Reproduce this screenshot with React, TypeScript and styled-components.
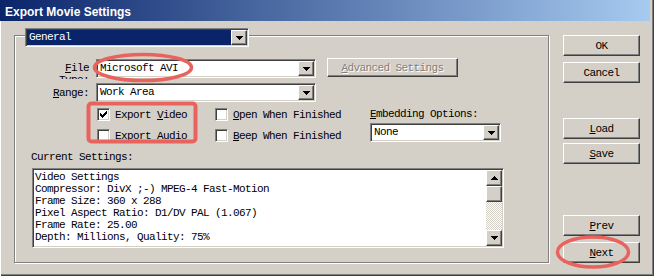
import React from 'react';
import styled, { createGlobalStyle, css } from 'styled-components';

const GlobalStyle = createGlobalStyle`
  * {
    box-sizing: border-box;
    margin: 0;
    padding: 0;
  }

  body {
    background: #d4d0c8;
    font-family: 'Liberation Mono', 'Courier New', monospace;
    font-size: 11px;
    letter-spacing: -0.6px;
    color: #000;
  }
`;

// classic 3d borders
const sunken = css`
  border: 1px solid;
  border-color: #808080 #ffffff #ffffff #808080;
  box-shadow: inset 1px 1px 0 #404040, inset -1px -1px 0 #d4d0c8;
`;

const raised = css`
  border: 1px solid;
  border-color: #ffffff #404040 #404040 #ffffff;
  box-shadow: inset -1px -1px 0 #808080;
  background: #d4d0c8;
`;

const Window = styled.div`
  position: relative;
  width: 654px;
  height: 276px;
  background: #d4d0c8;
  box-shadow: inset 1px 0 0 #ffffff, inset -1px -1px 0 #404040, inset -2px -2px 0 #808080;
  overflow: hidden;
`;

const TitleBar = styled.div`
  height: 21px;
  margin-right: 4px;
  padding: 3px 0 0 5px;
  display: flex;
  align-items: center;
  background: linear-gradient(to right, #0a246a, #a6caf0);
`;

const TitleText = styled.span`
  font-family: 'Liberation Sans', Arial, sans-serif;
  font-weight: bold;
  font-size: 12px;
  letter-spacing: 0;
  color: #ffffff;
`;

const Body = styled.div`
  display: flex;
  gap: 14px;
  padding: 14px 0 0 14px;
`;

const GroupBox = styled.div`
  width: 535px;
  height: 228px;
  border: 1px solid #808080;
  box-shadow: inset 1px 1px 0 #ffffff, 1px 1px 0 #ffffff;
  display: flex;
  flex-direction: column;
  align-items: flex-start;
`;

const HeaderSlot = styled.div`
  margin: -8px 0 0 10px;
`;

const Field = styled.div<{ $w: number; $active?: boolean }>`
  width: ${p => p.$w}px;
  height: 19px;
  padding: 1px;
  display: flex;
  ${sunken}
  background: ${p => (p.$active ? '#0a246a' : '#ffffff')};
`;

const FieldValue = styled.span<{ $active?: boolean }>`
  flex: 1;
  padding-left: 2px;
  line-height: 15px;
  white-space: nowrap;
  overflow: hidden;
  color: ${p => (p.$active ? '#ffffff' : '#000000')};
`;

const DropButton = styled.span`
  width: 16px;
  height: 15px;
  display: flex;
  align-items: center;
  justify-content: center;
  ${raised}
`;

const FieldRow = styled.div<{ $top: number }>`
  height: 19px;
  display: flex;
  align-items: center;
  margin-top: ${p => p.$top}px;
`;

const FieldLabel = styled.label<{ $clip?: boolean }>`
  width: 40px;
  margin: 0 7px 0 34px;
  text-align: right;
  line-height: 12px;
  ${p =>
    p.$clip &&
    css`
      align-self: flex-start;
      margin-top: 3px;
      height: 17px;
      overflow: hidden;
    `}
`;

const Button = styled.button<{ $w: number; $h: number; $disabled?: boolean }>`
  width: ${p => p.$w}px;
  height: ${p => p.$h}px;
  display: flex;
  align-items: center;
  justify-content: center;
  font-family: inherit;
  font-size: inherit;
  letter-spacing: inherit;
  line-height: 12px;
  ${raised}
  color: ${p => (p.$disabled ? '#808080' : '#000000')};
  text-shadow: ${p => (p.$disabled ? '1px 1px 0 #ffffff' : 'none')};
`;

const AdvancedSlot = styled.div`
  margin-left: 11px;
  align-self: flex-start;
  margin-top: -1px;
`;

const Options = styled.div`
  display: flex;
  margin: 6px 0 0 82px;
`;

const CheckColumn = styled.div<{ $w: number }>`
  width: ${p => p.$w}px;
  display: flex;
  flex-direction: column;
  gap: 8px;
`;

const CheckItem = styled.label`
  height: 13px;
  display: flex;
  align-items: center;
  gap: 5px;
  line-height: 12px;
  white-space: nowrap;
`;

const CheckBox = styled.span`
  width: 13px;
  height: 13px;
  display: flex;
  align-items: center;
  justify-content: center;
  ${sunken}
  background: #ffffff;
`;

const EmbedColumn = styled.div`
  display: flex;
  flex-direction: column;
  gap: 2px;
`;

const EmbedLabel = styled.label`
  height: 13px;
  line-height: 13px;
  white-space: nowrap;
`;

const SectionLabel = styled.div`
  margin: 9px 0 0 16px;
  line-height: 12px;
`;

const TextBox = styled.div`
  width: 472px;
  height: 80px;
  margin: 5px 0 0 17px;
  padding: 1px;
  display: flex;
  ${sunken}
  background: #ffffff;
`;

const SettingsText = styled.pre`
  flex: 1;
  padding: 1px 0 0 1px;
  font-family: inherit;
  font-size: inherit;
  line-height: 12px;
  overflow: hidden;
`;

const ScrollBar = styled.div`
  width: 16px;
  display: flex;
  flex-direction: column;
`;

const ScrollButton = styled.span<{ $h: number }>`
  height: ${p => p.$h}px;
  display: flex;
  align-items: center;
  justify-content: center;
  ${raised}
`;

const ScrollTrack = styled.span`
  flex: 1;
  background: repeating-conic-gradient(#ffffff 0 25%, #d4d0c8 0 50%) 0 0 / 2px 2px;
`;

const Side = styled.div`
  width: 77px;
  height: 228px;
  display: flex;
  flex-direction: column;
`;

const ButtonGroup = styled.div<{ $gap: number; $top?: string }>`
  display: flex;
  flex-direction: column;
  gap: ${p => p.$gap}px;
  margin-top: ${p => p.$top ?? '0'};
`;

const Marks = styled.svg`
  position: absolute;
  left: 0;
  top: 0;
  pointer-events: none;
`;

const PixelArt = styled.svg`
  display: block;
`;

const CHECK = ['......x', '.....xx', 'x...xxx', 'xx.xxx.', 'xxxxx..', '.xxx...', '..x....'];
const DOWN = ['xxxxxxx', '.xxxxx.', '..xxx..', '...x...'];
const UP = [...DOWN].reverse();

function Pixels({ rows }: { rows: string[] }) {
  return (
    <PixelArt width={rows[0].length} height={rows.length} fill="#000" shapeRendering="crispEdges">
      {rows.flatMap((r, y) =>
        r.split('').map((c, x) => (c === 'x' ? <rect key={`${x}-${y}`} x={x} y={y} width={1} height={1} /> : null))
      )}
    </PixelArt>
  );
}

function Select({ value, width, active }: { value: string; width: number; active?: boolean }) {
  return (
    <Field $w={width} $active={active}>
      <FieldValue $active={active}>{value}</FieldValue>
      <DropButton>
        <Pixels rows={DOWN} />
      </DropButton>
    </Field>
  );
}

function Check({ checked, children }: { checked?: boolean; children: React.ReactNode }) {
  return (
    <CheckItem>
      <CheckBox>{checked && <Pixels rows={CHECK} />}</CheckBox>
      <span>{children}</span>
    </CheckItem>
  );
}

const settings = [
  'Video Settings',
  'Compressor: DivX ;-) MPEG-4 Fast-Motion',
  'Frame Size: 360 x 288',
  'Pixel Aspect Ratio: D1/DV PAL (1.067)',
  'Frame Rate: 25.00',
  'Depth: Millions, Quality: 75%',
];

export default function App() {
  return (
    <Window>
      <GlobalStyle />
      <TitleBar>
        <TitleText>Export Movie Settings</TitleText>
      </TitleBar>

      <Body>
        <GroupBox>
          <HeaderSlot>
            <Select value="General" width={224} active />
          </HeaderSlot>

          <FieldRow $top={12}>
            <FieldLabel $clip>
              <u>F</u>ile Type:
            </FieldLabel>
            <Select value="Microsoft AVI" width={220} />
            <AdvancedSlot>
              <Button $w={131} $h={19} $disabled>
                <span>
                  <u>A</u>dvanced Settings
                </span>
              </Button>
            </AdvancedSlot>
          </FieldRow>

          <FieldRow $top={5}>
            <FieldLabel>
              <u>R</u>ange:
            </FieldLabel>
            <Select value="Work Area" width={220} />
          </FieldRow>

          <Options>
            <CheckColumn $w={118}>
              <Check checked>
                Export <u>V</u>ideo
              </Check>
              <Check>
                Export <u>A</u>udio
              </Check>
            </CheckColumn>
            <CheckColumn $w={155}>
              <Check>
                <u>O</u>pen When Finished
              </Check>
              <Check>
                <u>B</u>eep When Finished
              </Check>
            </CheckColumn>
            <EmbedColumn>
              <EmbedLabel>
                <u>E</u>mbedding Options:
              </EmbedLabel>
              <Select value="None" width={131} />
            </EmbedColumn>
          </Options>

          <SectionLabel>Current Settings:</SectionLabel>
          <TextBox>
            <SettingsText>{settings.join('\n')}</SettingsText>
            <ScrollBar>
              <ScrollButton $h={16}>
                <Pixels rows={UP} />
              </ScrollButton>
              <ScrollButton $h={16} />
              <ScrollTrack />
              <ScrollButton $h={16}>
                <Pixels rows={DOWN} />
              </ScrollButton>
            </ScrollBar>
          </TextBox>
        </GroupBox>

        <Side>
          <ButtonGroup $gap={6}>
            <Button $w={77} $h={21}>OK</Button>
            <Button $w={77} $h={21}>Cancel</Button>
          </ButtonGroup>
          <ButtonGroup $gap={4} $top="35px">
            <Button $w={77} $h={21}>
              <span>
                <u>L</u>oad
              </span>
            </Button>
            <Button $w={77} $h={21}>
              <span>
                <u>S</u>ave
              </span>
            </Button>
          </ButtonGroup>
          <ButtonGroup $gap={6} $top="auto">
            <Button $w={77} $h={21}>
              <span>
                <u>P</u>rev
              </span>
            </Button>
            <Button $w={77} $h={21}>
              <span>
                <u>N</u>ext
              </span>
            </Button>
          </ButtonGroup>
        </Side>
      </Body>

      {/* red annotation marks drawn over the dialog */}
      <Marks width={654} height={276} fill="none" stroke="#e8625e" strokeWidth={3.5}>
        <ellipse cx={143} cy={67.5} rx={48.5} ry={13} />
        <rect x={88.5} y={103.5} width={107} height={38} rx={3} strokeWidth={4} />
        <ellipse cx={593} cy={252} rx={35.5} ry={15} />
      </Marks>
    </Window>
  );
}
